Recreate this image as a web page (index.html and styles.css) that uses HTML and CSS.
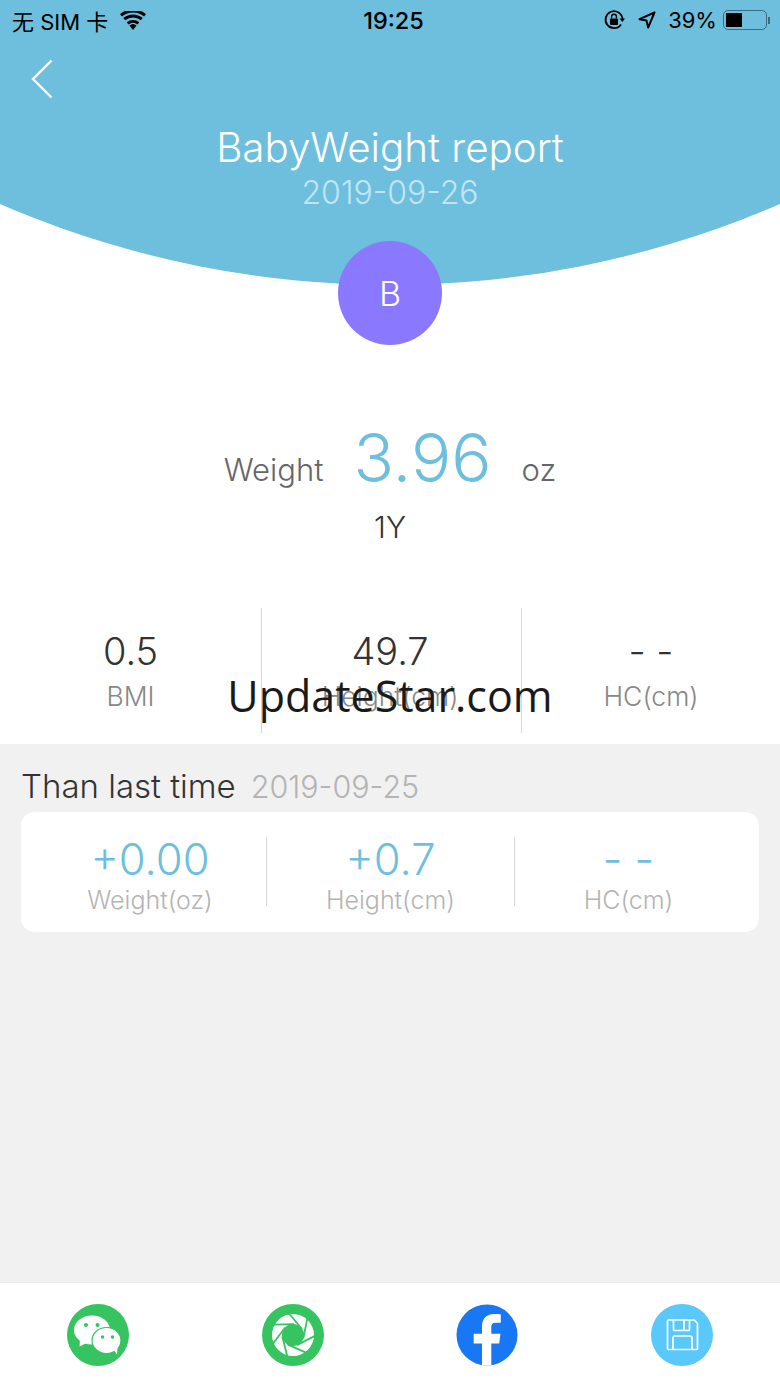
FILE: index.html
```html
<!DOCTYPE html>
<html lang="en">
<head>
    <meta charset="UTF-8">
    <meta name="viewport" content="width=device-width, initial-scale=1.0">
    <title>BabyWeight report</title>
    <link rel="stylesheet" href="styles.css">
</head>
<body>
    <div class="page">
        <header class="header">
            <div class="status-bar">
                <div class="status-left">
                    <span>无 SIM 卡</span>
                    <svg class="wifi" viewBox="0 0 26 19" width="26" height="19">
                        <path d="M13 19l-3.6-4.4a5.6 5.6 0 0 1 7.2 0z" fill="#000"/>
                        <path d="M7.6 12.4a8.4 8.4 0 0 1 10.8 0" fill="none" stroke="#000" stroke-width="3"/>
                        <path d="M4.2 8.2a13.6 13.6 0 0 1 17.6 0" fill="none" stroke="#000" stroke-width="3"/>
                        <path d="M1 4.3a18.6 18.6 0 0 1 24 0" fill="none" stroke="#000" stroke-width="3"/>
                    </svg>
                </div>
                <div class="status-time">19:25</div>
                <div class="status-right">
                    <svg class="lock" viewBox="0 0 22 22" width="22" height="22">
                        <path d="M18 15.5A8.5 8.5 0 1 1 19.5 10" fill="none" stroke="#000" stroke-width="1.8"/>
                        <path d="M16.6 9.5h5.4l-2.7 3.6z" fill="#000"/>
                        <rect x="7" y="9.5" width="8" height="6.5" rx="1" fill="#000"/>
                        <path d="M8.6 9.5V7.6a2.4 2.4 0 0 1 4.8 0v1.9" fill="none" stroke="#000" stroke-width="1.4"/>
                    </svg>
                    <svg viewBox="0 0 18 18" width="18" height="18">
                        <path d="M16.5 1.5L1.5 8.2l7 1.4 1.6 7z" fill="none" stroke="#000" stroke-width="2" stroke-linejoin="round"/>
                    </svg>
                    <span class="battery-text">39%</span>
                    <div class="battery"><div class="battery-level"></div></div>
                    <div class="battery-tip"></div>
                </div>
            </div>
            <div class="nav">
                <svg class="back" viewBox="0 0 24 40" width="24" height="40">
                    <path d="M21.5 1.5L3 20l18.5 18.5" fill="none" stroke="#fff" stroke-width="2.4"/>
                </svg>
            </div>
            <h1 class="title">BabyWeight report</h1>
            <div class="date">2019-09-26</div>
        </header>

        <main class="summary">
            <div class="avatar">B</div>
            <div class="weight-row">
                <span class="weight-label">Weight</span>
                <span class="weight-value">3.96</span>
                <span class="weight-label">oz</span>
            </div>
            <div class="age">1Y</div>
            <div class="stats">
                <div class="stat">
                    <div class="stat-value">0.5</div>
                    <div class="stat-label">BMI</div>
                </div>
                <div class="stat stat-mid">
                    <div class="stat-value">49.7</div>
                    <div class="stat-label">Height(cm)</div>
                </div>
                <div class="stat">
                    <div class="stat-value">- -</div>
                    <div class="stat-label">HC(cm)</div>
                </div>
            </div>
            <div class="watermark">UpdateStar.com</div>
        </main>

        <section class="compare">
            <div class="compare-head">
                <span class="compare-title">Than last time</span>
                <span class="compare-date">2019-09-25</span>
            </div>
            <div class="compare-card">
                <div class="delta delta-first">
                    <div class="delta-value">+0.00</div>
                    <div class="delta-label">Weight(oz)</div>
                </div>
                <div class="delta">
                    <div class="delta-value">+0.7</div>
                    <div class="delta-label">Height(cm)</div>
                </div>
                <div class="delta delta-last">
                    <div class="delta-value">- -</div>
                    <div class="delta-label">HC(cm)</div>
                </div>
            </div>
        </section>

        <footer class="share-bar">
            <svg class="share-icon" viewBox="0 0 62 62">
                <circle cx="31" cy="31" r="31" fill="#35c45f"/>
                <ellipse cx="25" cy="26" rx="18" ry="14.500" fill="#fff"/>
                <path d="M13 35l-.5 7.500 8-4z" fill="#fff"/>
                <ellipse cx="39.500" cy="36.500" rx="14.500" ry="13" fill="#fff" stroke="#35c45f" stroke-width="1.200"/>
                <path d="M46 45l4 5.500.5-8z" fill="#fff"/>
                <circle cx="19" cy="21" r="2" fill="#35c45f"/>
                <circle cx="30.500" cy="21" r="2" fill="#35c45f"/>
                <circle cx="35.500" cy="33" r="1.800" fill="#35c45f"/>
                <circle cx="45.500" cy="33" r="1.800" fill="#35c45f"/>
            </svg>
            <svg class="share-icon" viewBox="0 0 62 62">
                <circle cx="31" cy="31" r="31" fill="#35c45f"/>
                <circle cx="31" cy="31" r="21" fill="#fff"/>
                <g stroke="#35c45f" stroke-width="1.800">
                    <line x1="26.600" y1="9" x2="40" y2="25"/>
                    <line x1="26.600" y1="9" x2="40" y2="25" transform="rotate(51.430 31 31)"/>
                    <line x1="26.600" y1="9" x2="40" y2="25" transform="rotate(102.860 31 31)"/>
                    <line x1="26.600" y1="9" x2="40" y2="25" transform="rotate(154.290 31 31)"/>
                    <line x1="26.600" y1="9" x2="40" y2="25" transform="rotate(205.720 31 31)"/>
                    <line x1="26.600" y1="9" x2="40" y2="25" transform="rotate(257.150 31 31)"/>
                    <line x1="26.600" y1="9" x2="40" y2="25" transform="rotate(308.580 31 31)"/>
                </g>
                <circle cx="31" cy="31" r="11" fill="#35c45f"/>
            </svg>
            <svg class="share-icon" viewBox="0 0 62 62">
                <defs>
                    <clipPath id="fbClip"><circle cx="31" cy="31" r="30.500"/></clipPath>
                </defs>
                <circle cx="31" cy="31" r="30.500" fill="#1877f2"/>
                <path clip-path="url(#fbClip)" d="M26 62V39.500h-8.300V29.700H26v-7.200C26 14.400 30.800 10 38.100 10c2.800 0 5.300.2 6.700.4v8.400h-4.700c-4 0-4.800 1.900-4.800 4.600v6.300h9.200l-1.300 9.800h-7.900V62z" fill="#fff"/>
            </svg>
            <svg class="share-icon" viewBox="0 0 62 62">
                <circle cx="31" cy="31" r="31" fill="#5ac8fa"/>
                <g fill="none" stroke="#fff" stroke-width="1.700" stroke-linejoin="round">
                    <path d="M16.500 17a1 1 0 0 1 1-1h26l3 3.500v25a1 1 0 0 1-1 1h-28a1 1 0 0 1-1-1z"/>
                    <path d="M22.500 16v9.500a1 1 0 0 0 1 1h14a1 1 0 0 0 1-1V16"/>
                    <path d="M33 16.500v9.500"/>
                    <path d="M22 45.500V34a2 2 0 0 1 2-2h15a2 2 0 0 1 2 2v11.500"/>
                </g>
            </svg>
        </footer>
    </div>
</body>
</html>
```

FILE: styles.css
```css
* {
    box-sizing: border-box;
}

body {
    margin: 0;
    font-family: "Inter", "Noto Sans CJK SC", sans-serif;
    font-weight: 300;
    background-color: #fff;
}

.page {
    display: flex;
    flex-direction: column;
    width: 780px;
    height: 1387px;
    overflow: hidden;
}

.header {
    height: 285px;
    background-color: #6ebfde;
    clip-path: circle(979px at 390px -694px);
    text-align: center;
    color: #fff;
}

.status-bar {
    display: flex;
    justify-content: space-between;
    align-items: center;
    height: 40px;
    padding: 0 10px 0 12px;
    color: #000;
    font-size: 22px;
    font-weight: 400;
}

.status-left {
    display: flex;
    align-items: center;
    gap: 12px;
    width: 305px;
}

.status-time {
    font-size: 23.500px;
    font-weight: 500;
}

.status-right {
    display: flex;
    align-items: center;
    justify-content: flex-end;
    gap: 10px;
    width: 300px;
}

.lock {
    margin-right: 3px;
}

.battery-text {
    margin-left: 2px;
}

.battery {
    width: 44px;
    height: 20px;
    margin-left: -4px;
    padding: 2px;
    border: 1.500px solid #3d6b80;
    border-radius: 5px;
}

.battery-level {
    width: 16px;
    height: 100%;
    background-color: #000;
}

.battery-tip {
    width: 2px;
    height: 7px;
    margin-left: -9px;
    background-color: #3d6b80;
}

.nav {
    display: flex;
    height: 40px;
    padding: 19px 0 0 30px;
}

.title {
    margin: 45px 0 0;
    font-size: 40.300px;
    font-weight: 300;
    line-height: 46px;
}

.date {
    margin-top: 5px;
    font-size: 32px;
    line-height: 34px;
    color: #c0e6f5;
}

.summary {
    position: relative;
    display: flex;
    flex-direction: column;
    align-items: center;
    height: 459px;
}

.avatar {
    display: flex;
    justify-content: center;
    align-items: center;
    width: 104px;
    height: 104px;
    margin-top: -44px;
    border-radius: 50%;
    background-color: #8a78ff;
    color: #fff;
    font-size: 34px;
    position: relative;
}

.weight-row {
    display: flex;
    align-items: center;
    gap: 30px;
    height: 70px;
    margin-top: 77px;
}

.weight-label {
    margin-top: 24px;
    font-size: 31px;
    color: #666;
}

.weight-value {
    font-size: 67px;
    color: #6ebfde;
}

.age {
    margin-top: 16px;
    font-size: 30px;
    line-height: 38px;
    color: #333;
}

.stats {
    display: grid;
    grid-template-columns: 261px 260px 259px;
    width: 100%;
    height: 125px;
    margin-top: 62px;
}

.stat {
    padding-top: 21px;
    text-align: center;
}

.stat + .stat {
    border-left: 1.500px solid #d8d8d8;
}

.stat-mid {
    padding-right: 3px;
}

.stat-value {
    font-size: 38px;
    line-height: 44px;
    color: #333;
}

.stat-label {
    margin-top: 7px;
    font-size: 26.500px;
    line-height: 32px;
    color: #888;
}

.watermark {
    position: absolute;
    top: 381px;
    left: 0;
    right: 0;
    text-align: center;
    font-family: "Open Sans", sans-serif;
    font-weight: 400;
    font-size: 43px;
    line-height: 60px;
    color: #1a1a1a;
}

.compare {
    flex: 1;
    padding: 20px 21px 0;
    background-color: #f1f1f1;
}

.compare-head {
    display: flex;
    align-items: baseline;
    gap: 15px;
    height: 48px;
}

.compare-title {
    font-size: 33px;
    line-height: 44px;
    color: #333;
}

.compare-date {
    font-size: 30.500px;
    color: #b4b4b4;
}

.compare-card {
    display: grid;
    grid-template-columns: 245px 248px 245px;
    align-items: start;
    height: 120px;
    padding: 25px 0 0;
    background-color: #fff;
    border-radius: 14px;
}

.delta {
    height: 69px;
    text-align: center;
}

.delta + .delta {
    border-left: 1.500px solid #d8d8d8;
}

.delta-first {
    padding-left: 13px;
}

.delta-last {
    padding-right: 17px;
}

.delta-value {
    margin-top: -4px;
    font-size: 43.500px;
    line-height: 52px;
    color: #6ebfde;
}

.delta-label {
    font-size: 25px;
    line-height: 30px;
    color: #b4b4b4;
}

.share-bar {
    display: grid;
    grid-template-columns: repeat(4, 1fr);
    justify-items: center;
    height: 105px;
    padding: 21px 1px 0;
    border-top: 1px solid #ececec;
    background-color: #fff;
}

.share-icon {
    width: 62px;
    height: 62px;
}
```
